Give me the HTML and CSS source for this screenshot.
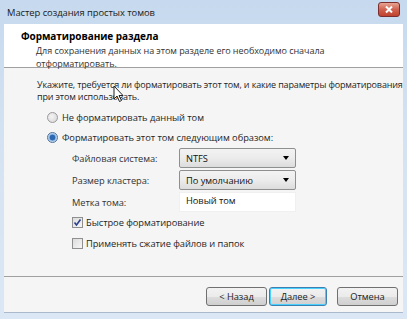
FILE: index.html
```html
<!DOCTYPE html>
<html lang="ru">
<head>
<meta charset="utf-8">
<link rel="stylesheet" href="styles.css">
</head>
<body>
<div class="window">
  <div class="titlebar">
    <span class="title">Мастер создания простых томов</span>
    <span class="close">
      <svg width="10" height="9" viewBox="0 0 10 9"><path d="M2 1.5 L8 7.5 M8 1.5 L2 7.5" stroke="#fff" stroke-width="2"/></svg>
    </span>
  </div>
  <div class="client">
    <div class="header">
      <div class="h-title">Форматирование раздела</div>
      <div class="h-sub">Для сохранения данных на этом разделе его необходимо сначала<br>отформатировать.</div>
    </div>
    <div class="body">
      <p class="intro">Укажите, требуется ли форматировать этот том, и какие параметры форматирования<br>при этом использовать.</p>
      <svg class="cursor" width="12" height="18" viewBox="0 0 12 18"><path d="M1 1 L1 14 L4 11 L6.5 16.5 L8.5 15.5 L6 10.5 L10 10.5 Z" fill="#fff" stroke="#222" stroke-width="1" stroke-linejoin="round"/></svg>
      <div class="radio-row"><span class="radio"></span><span>Не форматировать данный том</span></div>
      <div class="radio-row"><span class="radio checked"></span><span>Форматировать этот том следующим образом:</span></div>
      <div class="grid">
        <span class="lbl">Файловая система:</span>
        <span class="combo"><span>NTFS</span><span class="arrow"></span></span>
        <span class="lbl">Размер кластера:</span>
        <span class="combo"><span>По умолчанию</span><span class="arrow"></span></span>
        <span class="lbl">Метка тома:</span>
        <span class="edit">Новый том</span>
      </div>
      <div class="check-row"><span class="check checked">
        <svg width="9" height="9" viewBox="0 0 9 9"><path d="M1.5 4.5 L3.5 7 L7.5 1.5" fill="none" stroke="#2a3f8f" stroke-width="1.6"/></svg>
      </span><span>Быстрое форматирование</span></div>
      <div class="check-row"><span class="check"></span><span>Применять сжатие файлов и папок</span></div>
    </div>
    <div class="footer">
      <span class="btn">&lt; Назад</span>
      <span class="btn default">Далее &gt;</span>
      <span class="btn cancel">Отмена</span>
    </div>
  </div>
</div>
</body>
</html>
```

FILE: styles.css
```css
* { box-sizing: border-box; }
html, body { margin: 0; padding: 0; }
body {
  font-family: "Open Sans", "Noto Sans", sans-serif;
  font-size: 9.3px;
  letter-spacing: -0.05px;
  color: #1e1e1e;
}
.window {
  width: 407px;
  height: 319px;
  background: linear-gradient(#c6d9ee, #d3e2f2 40%, #dbe7f4);
  display: flex;
  flex-direction: column;
}
.titlebar {
  height: 24px;
  display: flex;
  align-items: center;
  justify-content: space-between;
  padding: 0 7px 0 7px;
}
.title {
  font-size: 9.4px;
  color: #1a1a1a;
}
.close {
  width: 22px;
  height: 15px;
  margin-top: -6px;
  border: 1px solid #7a2e2e;
  border-radius: 3px;
  background: linear-gradient(#e8a493, #d0624f 50%, #c0412e);
  display: flex;
  align-items: center;
  justify-content: center;
}
.client {
  margin: 0 4px 6px;
  background: #f5f5f5;
  flex: 1;
  display: flex;
  flex-direction: column;
  border-bottom: 1px solid #aab9cc;
}
.header {
  background: #fff;
  height: 44px;
  border-bottom: 1px solid #a0a0a0;
  padding: 6px 0 0 17px;
}
.h-title {
  font-weight: bold;
  font-size: 10px;
  color: #000;
  line-height: 13px;
}
.h-sub {
  margin: 1px 0 0 15px;
  font-size: 9px;
  line-height: 13px;
  color: #333;
  white-space: nowrap;
}
.body {
  flex: 1;
  padding: 11px 8px 0 33px;
  border-bottom: 1px solid #a0a0a0;
  position: relative;
}
.intro {
  margin: 0;
  font-size: 9px;
  letter-spacing: -0.15px;
  line-height: 12px;
  white-space: nowrap;
}
.cursor {
  position: absolute;
  left: 109px;
  top: 17px;
}
.radio-row {
  display: flex;
  align-items: center;
  gap: 4px;
  margin: 8px 0 0 10px;
  height: 12px;
}
.radio-row + .radio-row { margin-top: 8px; }
.radio {
  width: 11px;
  height: 11px;
  border-radius: 50%;
  border: 1px solid #9a9a9a;
  background: radial-gradient(circle at 40% 40%, #f4f4f4, #d4d4d4);
}
.radio.checked {
  border-color: #50739c;
  background: radial-gradient(circle, #2c69b2 0 2.6px, #8db7e6 3.2px, #d8e6f4 5px);
}
.grid {
  display: grid;
  grid-template-columns: 107px 117px;
  row-gap: 2px;
  margin: 5px 0 0 35px;
  align-items: center;
}
.lbl {
  color: #333;
}
.combo {
  height: 20px;
  border: 1px solid #8e8f8f;
  border-radius: 2px;
  background: linear-gradient(#f3f3f3, #ececec 50%, #dcdcdc);
  display: flex;
  align-items: center;
  justify-content: space-between;
  padding: 0 6px 0 6px;
  color: #111;
}
.arrow {
  width: 0;
  height: 0;
  border-left: 3.5px solid transparent;
  border-right: 3.5px solid transparent;
  border-top: 4px solid #000;
}
.edit {
  height: 20px;
  background: #fff;
  border: 1px solid #f0f0f0;
  padding: 1px 0 0 6px;
  line-height: 14px;
  color: #111;
}
.check-row {
  display: flex;
  align-items: center;
  gap: 3px;
  margin: 3px 0 0 35px;
  height: 14px;
}
.check-row + .check-row { margin-top: 7px; }
.check {
  width: 11px;
  height: 11px;
  border: 1px solid #8f8f8f;
  background: linear-gradient(135deg, #dcdcdc, #f6f6f6);
  display: flex;
  align-items: center;
  justify-content: center;
}
.footer {
  height: 35px;
  display: flex;
  align-items: center;
  justify-content: flex-end;
  padding: 4px 5px 0 0;
}
.btn {
  width: 61px;
  height: 19px;
  border: 1px solid #707070;
  border-radius: 3px;
  background: linear-gradient(#f2f2f2, #ebebeb 50%, #dddddd 51%, #cfcfcf);
  display: flex;
  align-items: center;
  justify-content: center;
  color: #222;
  margin-left: 2px;
}
.btn.default {
  width: 58px;
  border-color: #3c7fb1;
  box-shadow: inset 0 0 0 1px #48d0ff;
}
.btn.cancel { margin-left: 10px; }
```
